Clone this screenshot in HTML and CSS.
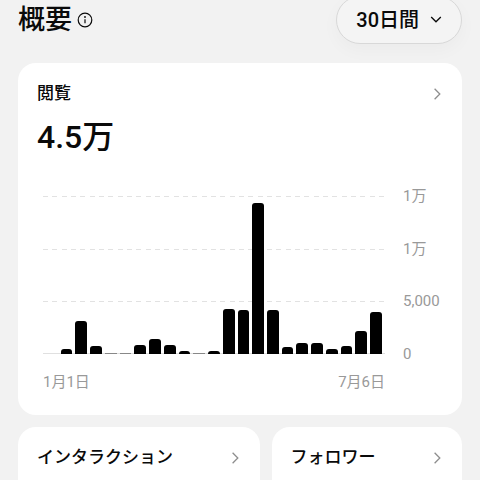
FILE: index.html
```html
<!DOCTYPE html>
<html lang="ja">
<head>
    <title>概要</title>
    <meta charset="utf-8">
    <meta name="viewport" content="width=device-width, initial-scale=1">
    <link rel="stylesheet" href="styles.css">
</head>
<body>
    <header class="header">
        <h1>概要</h1>
        <svg class="info-icon" viewBox="0 0 16 16" aria-hidden="true">
            <circle cx="8" cy="8" r="6.8" fill="none" stroke="currentColor" stroke-width="1.2"/>
            <path d="M8 7.2v4" fill="none" stroke="currentColor" stroke-width="1.2"/>
            <circle cx="8" cy="5" r="0.9" fill="currentColor"/>
        </svg>
        <button type="button" class="period">
            30日間
            <svg class="period-icon" viewBox="0 0 12 12" aria-hidden="true">
                <path d="M1.2 4L6 8.8 10.8 4"/>
            </svg>
        </button>
    </header>
    <main>
        <section class="card views">
            <a href="#views" class="card-link">
                <h2>閲覧</h2>
                <svg class="chevron" viewBox="0 0 12 12" aria-hidden="true"><path d="M3.6 0.8L8.8 6l-5.2 5.2"/></svg>
            </a>
            <p class="total">4.5万</p>
            <div class="chart">
                <div class="plot">
                    <div class="grid-lines">
                        <div class="grid-line"></div>
                        <div class="grid-line"></div>
                        <div class="grid-line"></div>
                    </div>
                    <div class="bars" id="bars"></div>
                </div>
                <div class="y-axis">
                    <span>1万</span>
                    <span>1万</span>
                    <span>5,000</span>
                    <span>0</span>
                </div>
                <div class="x-axis">
                    <span>1月1日</span>
                    <span>7月6日</span>
                </div>
            </div>
        </section>
        <div class="row">
            <section class="card">
                <a href="#interactions" class="card-link">
                    <h2>インタラクション</h2>
                    <svg class="chevron" viewBox="0 0 12 12" aria-hidden="true"><path d="M3.6 0.8L8.8 6l-5.2 5.2"/></svg>
                </a>
            </section>
            <section class="card">
                <a href="#followers" class="card-link">
                    <h2>フォロワー</h2>
                    <svg class="chevron" viewBox="0 0 12 12" aria-hidden="true"><path d="M3.6 0.8L8.8 6l-5.2 5.2"/></svg>
                </a>
            </section>
        </div>
    </main>
    <script>
        const MAX_VIEWS = 15000;
        const views = [0, 480, 3150, 760, 90, 90, 860, 1460, 830, 330, 110, 310, 4270, 4180, 14330, 4190, 630, 1050, 1020, 500, 800, 2150, 3950];

        const bars = document.getElementById('bars');
        views.forEach(value => {
            const bar = document.createElement('div');
            bar.className = value < 200 ? 'bar bar-low' : 'bar';
            bar.style.height = (value / MAX_VIEWS * 100) + '%';
            bars.appendChild(bar);
        });
    </script>
</body>
</html>
```
FILE: styles.css
```css
* {
    box-sizing: border-box;
}
body {
    font-family: Roboto, 'Noto Sans CJK JP', sans-serif;
    margin: 0;
    padding: 0 18px;
    background-color: #f2f2f2;
    color: #0a0a0a;
}
h1, h2, p {
    margin: 0;
    font-weight: 500;
}
.header {
    display: flex;
    align-items: center;
    margin: -4px 0 19px;
}
h1 {
    font-size: 27px;
    line-height: 32px;
}
.info-icon {
    width: 16px;
    height: 16px;
    margin-left: 5px;
}
.period {
    display: flex;
    align-items: center;
    gap: 11px;
    height: 48px;
    margin-left: auto;
    padding: 0 19px 3px;
    border: 1px solid #d8d8d8;
    border-radius: 24px;
    background: #f4f4f4;
    box-shadow: 0 6px 18px rgba(0, 0, 0, 0.03);
    color: inherit;
    font-family: inherit;
    font-size: 20px;
    font-weight: 500;
    cursor: pointer;
}
.period-icon,
.chevron {
    width: 12px;
    height: 12px;
    flex: none;
    fill: none;
    stroke: currentColor;
    stroke-width: 1.3;
}
.card {
    padding: 19px;
    border-radius: 18px;
    background: white;
}
.views {
    padding-bottom: 23px;
}
.card-link {
    display: flex;
    align-items: center;
    justify-content: space-between;
    color: inherit;
    text-decoration: none;
}
h2 {
    font-size: 17px;
    line-height: 23px;
}
.chevron {
    color: #8e8e8e;
}
.total {
    margin-top: 12px;
    font-size: 32px;
    line-height: 40px;
}
.chart {
    display: grid;
    grid-template-columns: 1fr 40px;
    column-gap: 18px;
    padding-left: 6px;
    margin-top: 39px;
    color: #999;
    font-size: 15px;
    line-height: 20px;
}
.plot {
    display: grid;
    height: 158px;
    border-bottom: 1px solid #e0e0e0;
}
.grid-lines,
.bars {
    grid-area: 1 / 1;
    display: flex;
    height: 158px;
}
.grid-lines {
    flex-direction: column;
}
.grid-line {
    flex: 1;
    background: repeating-linear-gradient(to right, #e2e2e2 0 5px, transparent 5px 9px, #e2e2e2 9px 14px, transparent 14px 19px, #e2e2e2 19px 24px, transparent 24px 28px) top / 100% 1px no-repeat;
}
.bars {
    align-items: flex-end;
    gap: 3px;
    padding: 0 3px;
}
.bar {
    flex: 1;
    border-radius: 3px 3px 0 0;
    background: black;
}
.bar-low {
    border-radius: 0;
    background: #888;
}
.y-axis {
    display: flex;
    flex-direction: column;
    justify-content: space-between;
    margin: -10px 0;
}
.x-axis {
    display: flex;
    justify-content: space-between;
    margin-top: 18px;
}
.row {
    display: flex;
    gap: 12px;
    margin-top: 12px;
}
.row .card {
    flex: 1 1 auto;
    min-height: 160px;
}
```
